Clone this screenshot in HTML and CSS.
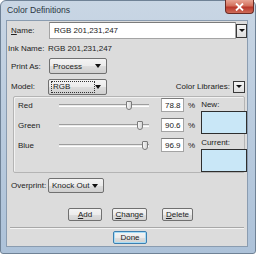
FILE: index.html
```html
<!DOCTYPE html>
<html lang="en">
<head>
  <meta charset="UTF-8">
  <title>Color Definitions</title>
  <link rel="stylesheet" href="styles.css">
</head>
<body>

  <div class="window">
    <div class="titlebar">
      <span class="title">Color Definitions</span>
      <div class="close">
        <svg width="9" height="8" viewBox="0 0 9 8"><path d="M1 0.5 L8 7.5 M8 0.5 L1 7.5" stroke="#fff" stroke-width="1.8"/></svg>
      </div>
    </div>

    <div class="client">
      <div class="row row-name">
        <span class="lbl lbl-name"><u>N</u>ame:</span>
        <div class="textbox name-box">RGB 201,231,247</div>
        <div class="dd-btn"><span class="arrow small"></span></div>
      </div>

      <div class="row row-ink">
        <span class="lbl-ink">Ink Name:</span>
        <span class="ink-val">RGB 201,231,247</span>
      </div>

      <div class="row row-print">
        <span class="lbl">Print As:</span>
        <div class="combo combo-print"><span class="combo-text">Process</span><span class="arrow"></span></div>
      </div>

      <div class="row row-model">
        <span class="lbl">Model:</span>
        <div class="combo combo-model"><span class="combo-text focus">RGB</span><span class="arrow"></span></div>
        <span class="libs">Color Libraries:</span>
        <div class="dd-btn lib-btn"><span class="arrow small"></span></div>
      </div>

      <div class="group">
        <div class="channels">
          <div class="channel">
            <span class="ch-name">Red</span>
            <div class="track"><span class="thumb" style="left: 78.8%"></span></div>
            <div class="textbox pct">78.8</div>
            <span class="pct-sign">%</span>
          </div>
          <div class="channel">
            <span class="ch-name">Green</span>
            <div class="track"><span class="thumb" style="left: 90.6%"></span></div>
            <div class="textbox pct">90.6</div>
            <span class="pct-sign">%</span>
          </div>
          <div class="channel">
            <span class="ch-name">Blue</span>
            <div class="track"><span class="thumb" style="left: 96.9%"></span></div>
            <div class="textbox pct">96.9</div>
            <span class="pct-sign">%</span>
          </div>
        </div>
        <div class="swatches">
          <span class="sw-lbl">New:</span>
          <div class="swatch"></div>
          <span class="sw-lbl sw-cur">Current:</span>
          <div class="swatch"></div>
        </div>
      </div>

      <div class="row row-over">
        <span class="lbl">Overprint:</span>
        <div class="combo combo-over"><span class="combo-text">Knock Out</span><span class="arrow"></span></div>
      </div>

      <div class="row row-buttons">
        <button class="btn btn-add"><u>A</u>dd</button>
        <button class="btn btn-change"><u>C</u>hange</button>
        <button class="btn btn-delete"><u>D</u>elete</button>
      </div>

      <div class="separator"></div>

      <div class="row row-done">
        <button class="btn btn-done">Done</button>
      </div>
    </div>
  </div>

</body>
</html>
```

FILE: styles.css
```css
* {
  box-sizing: border-box;
  margin: 0;
  padding: 0;
}

body {
  font-family: "Liberation Sans", Arial, sans-serif;
  font-size: 8px;
  color: #222;
  background: #ffffff;
}

.window {
  width: 256px;
  height: 254px;
  display: flex;
  flex-direction: column;
  padding: 0 7px 6px 5px;
  background: linear-gradient(180deg, #c9d6e4 0%, #bccddf 40%, #adc2d9 100%);
  border: 1px solid #6f8296;
  border-radius: 6px 6px 3px 3px;
}

/* Title bar */
.titlebar {
  height: 19px;
  display: flex;
  align-items: flex-start;
  justify-content: space-between;
}

.title {
  font-size: 8.6px;
  color: #2a3642;
  margin: 4px 0 0 1px;
}

.close {
  width: 29px;
  height: 14px;
  margin: -1px -6px 0 0;
  display: flex;
  align-items: center;
  justify-content: center;
  background: linear-gradient(180deg, #e8a493 0%, #d3705c 45%, #b9372a 55%, #cf6c58 100%);
  border: 1px solid #6b2b24;
  border-top: none;
  border-radius: 0 0 4px 4px;
}

/* Client area */
.client {
  flex: 1;
  display: flex;
  flex-direction: column;
  background: #dcdcdc;
  border: 1px solid #8a9cb0;
}

.row {
  display: flex;
  align-items: center;
}

.lbl {
  width: 37px;
  margin-left: 4px;
  flex: none;
}

.textbox {
  background: #fff;
  border: 1px solid #a4a4a4;
  border-top-color: #7c7c7c;
  display: flex;
  align-items: center;
  padding-left: 3px;
}

.arrow {
  width: 0;
  height: 0;
  border-left: 3.5px solid transparent;
  border-right: 3.5px solid transparent;
  border-top: 4px solid #111;
}

.arrow.small {
  border-left-width: 3px;
  border-right-width: 3px;
  border-top-width: 3px;
}

.dd-btn {
  width: 11px;
  height: 14px;
  flex: none;
  display: flex;
  align-items: center;
  justify-content: center;
  background: linear-gradient(180deg, #f4f4f4, #dedede);
  border: 1px solid #3a3a3a;
}

.row-name {
  margin-top: 1px;
  height: 17px;
}

.name-box {
  width: 194px;
  height: 17px;
  margin-left: 1px;
  padding-left: 4px;
}

.row-ink {
  margin-top: 2px;
  height: 14px;
}

.lbl-ink {
  margin-left: 1px;
  width: 40px;
}

/* Combo boxes */
.combo {
  height: 16px;
  display: flex;
  align-items: center;
  justify-content: space-between;
  padding: 0 5px 0 3px;
  background: linear-gradient(180deg, #f3f3f3 0%, #ebebeb 50%, #dddddd 51%, #cfcfcf 100%);
  border: 1px solid #707070;
  border-radius: 2px;
}

.row-print {
  margin-top: 3px;
  height: 16px;
}

.combo-print {
  width: 58px;
  margin-left: 1px;
}

.row-model {
  margin-top: 4px;
  height: 17px;
}

.combo-model {
  width: 59px;
}

.combo-text.focus {
  width: 44px;
  height: 12px;
  margin-left: -1px;
  padding-left: 1px;
  border: 1px dotted #333;
  display: flex;
  align-items: center;
}

.libs {
  margin-left: auto;
  margin-right: 3px;
}

.lib-btn {
  width: 12px;
  height: 12px;
  margin-right: 2px;
}

/* Color group */
.group {
  margin: 1px 2px 0 6px;
  height: 77px;
  display: flex;
  border: 1px solid #b4b4b4;
  border-radius: 2px;
  box-shadow: inset 1px 1px 0 #f2f2f2;
}

.channels {
  display: flex;
  flex-direction: column;
  gap: 6px;
  padding-top: 1px;
}

.channel {
  display: flex;
  align-items: center;
  height: 14px;
}

.ch-name {
  width: 41px;
  margin-left: 4px;
}

.track {
  position: relative;
  width: 90px;
  height: 3px;
  background: #eaeaea;
  border-top: 1px solid #9d9d9d;
  border-bottom: 1px solid #ffffff;
}

.thumb {
  position: absolute;
  top: -4px;
  width: 6px;
  height: 9px;
  margin-left: -4px;
  background: linear-gradient(90deg, #f6f6f6, #d6d6d6);
  border: 1px solid #7a7a7a;
  border-radius: 1px 1px 3px 3px;
}

.pct {
  width: 23px;
  height: 14px;
  margin-left: 12px;
}

.pct-sign {
  margin-left: 4px;
}

.swatches {
  display: flex;
  flex-direction: column;
  margin-left: 6px;
  padding-top: 3px;
}

.sw-lbl {
  height: 10px;
}

.swatch {
  width: 46px;
  height: 25px;
  margin-top: 2px;
  background: rgb(201, 231, 247);
  border: 1px solid #2e2e2e;
}

.sw-cur {
  margin-top: 4px;
}

/* Bottom rows */
.row-over {
  margin-top: 5px;
  height: 15px;
}

.combo-over {
  width: 56px;
  height: 15px;
}

.row-buttons {
  margin-top: 15px;
  height: 13px;
}

.btn {
  font-family: "Liberation Sans", Arial, sans-serif;
  font-size: 8px;
  color: #222;
  height: 13px;
  background: linear-gradient(180deg, #f4f4f4 0%, #ececec 50%, #dedede 51%, #d2d2d2 100%);
  border: 1px solid #707070;
  border-radius: 2px;
}

.btn-add {
  width: 34px;
  margin-left: 61px;
}

.btn-change {
  width: 35px;
  margin-left: 10px;
}

.btn-delete {
  width: 31px;
  margin-left: 15px;
}

.separator {
  margin: 6px 3px 0 3px;
  height: 2px;
  border-top: 1px solid #a8a8a8;
  border-bottom: 1px solid #f4f4f4;
}

.row-done {
  margin-top: 2px;
  height: 13px;
}

.btn-done {
  width: 34px;
  margin-left: 106px;
  border-color: #3c7fb1;
  box-shadow: inset 0 0 0 1px #a6dcf6;
}
```
